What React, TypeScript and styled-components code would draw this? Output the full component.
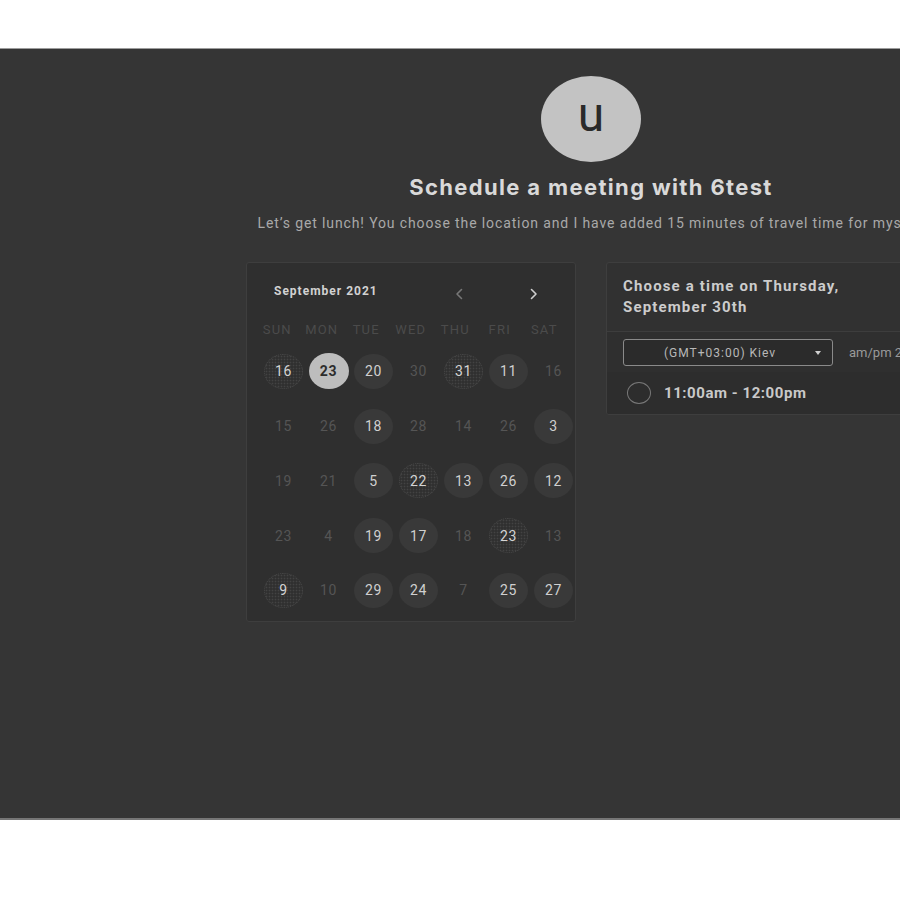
import React from "react";
import styled, { createGlobalStyle, css } from "styled-components";

const GlobalStyle = createGlobalStyle`
  html, body {
    margin: 0;
    padding: 0;
    background: #ffffff;
    overflow: hidden;
  }
  body {
    font-family: Roboto, "Liberation Sans", Arial, sans-serif;
  }
  * { box-sizing: border-box; }
`;

const Section = styled.section`
  margin-top: 48px;
  height: 772px;
  background: #353535;
  border-top: 1px solid #9c9c9c;
  border-bottom: 2px solid #767676;
  overflow: hidden;
  display: flex;
  padding-top: 27px;
`;

const Column = styled.div`
  width: 690px;
  flex-shrink: 0;
  margin-left: 246px;
  display: flex;
  flex-direction: column;
  align-items: center;
`;

const Avatar = styled.div`
  width: 100px;
  height: 86px;
  border-radius: 50%;
  background: #c3c3c3;
  color: #2a2a2a;
  display: flex;
  align-items: center;
  justify-content: center;
  font-family: Roboto, "Liberation Sans", sans-serif;
  font-size: 48px;
  line-height: 1;
  padding-bottom: 8px;
`;

const Title = styled.h1`
  margin: 11px 0 0;
  font-family: Inter, Roboto, sans-serif;
  font-weight: 700;
  font-size: 22px;
  line-height: 28px;
  letter-spacing: 1.35px;
  color: #d9d9d9;
  white-space: nowrap;
`;

const Subtitle = styled.p`
  margin: 12px 0 0;
  font-size: 14px;
  line-height: 20px;
  letter-spacing: 0.88px;
  color: #a9a9a9;
  white-space: nowrap;
`;

const Cards = styled.div`
  margin-top: 29px;
  width: 100%;
  display: flex;
  gap: 30px;
  align-items: flex-start;
`;

const CalendarCard = styled.div`
  width: 330px;
  flex-shrink: 0;
  background: #2f2f2f;
  border: 1px solid #3e3e3e;
  border-radius: 3px;
  padding: 20px 0 3px;
`;

const CalHeader = styled.div`
  display: flex;
  align-items: center;
  height: 16px;
  padding-left: 27px;
`;

const MonthLabel = styled.span`
  font-size: 12px;
  font-weight: 700;
  letter-spacing: 1px;
  color: #d2d2d2;
  width: 180px;
`;

const NavButton = styled.span<{ $bright?: boolean }>`
  display: inline-flex;
  align-items: center;
  justify-content: center;
  width: 10px;
  height: 16px;
  margin-top: 6px;
  color: ${(p) => (p.$bright ? "#cfcfcf" : "#777777")};
`;

const NavGap = styled.span`
  width: 65px;
`;

const Weekdays = styled.div`
  margin: 18px 0 0 8px;
  display: grid;
  grid-template-columns: repeat(7, 44.5px);
  height: 24px;
  align-items: center;
`;

const Weekday = styled.span`
  text-align: center;
  font-size: 13px;
  color: #4b4b4b;
  letter-spacing: 1.2px;
`;

const DayGrid = styled.div`
  margin: 3px 0 0 14px;
  display: grid;
  grid-template-columns: repeat(7, 45px);
  grid-auto-rows: 54.75px;
`;

const DayCell = styled.div`
  display: flex;
  align-items: center;
  justify-content: center;
`;

type DayState = "a" | "d" | "t" | "s";

const Day = styled.span<{ $state: DayState }>`
  width: 39px;
  height: 35px;
  border-radius: 50%;
  display: flex;
  align-items: center;
  justify-content: center;
  font-size: 14px;
  font-weight: 400;
  letter-spacing: 0.6px;
  color: #d0d0d0;
  ${(p) =>
    p.$state === "a" &&
    css`
      background: #393939;
    `}
  ${(p) =>
    p.$state === "d" &&
    css`
      color: #555555;
    `}
  ${(p) =>
    p.$state === "t" &&
    css`
      background-color: #303030;
      background-image: radial-gradient(circle, rgba(255, 255, 255, 0.09) 0.7px, transparent 1.1px);
      background-size: 3px 3px;
      border: 1px dotted #484848;
      color: #d4d4d4;
    `}
  ${(p) =>
    p.$state === "s" &&
    css`
      background: #bdbdbd;
      color: #2c2c2c;
      font-weight: 700;
      width: 40px;
      height: 36px;
    `}
`;

const TimePanel = styled.div`
  width: 330px;
  flex-shrink: 0;
  background: #313131;
  border: 1px solid #3e3e3e;
  border-radius: 3px;
  overflow: hidden;
`;

const PanelHeader = styled.div`
  padding: 13px 16px 13px;
  font-size: 15px;
  font-weight: 700;
  line-height: 21px;
  letter-spacing: 1.15px;
  color: #cccccc;
  border-bottom: 1px solid #3d3d3d;
`;

const ControlsRow = styled.div`
  display: flex;
  align-items: center;
  gap: 16px;
  padding: 7px 16px 6px;
  background: #2f2f2f;
  white-space: nowrap;
`;

const Select = styled.div`
  width: 210px;
  flex-shrink: 0;
  height: 27px;
  border: 1px solid #8a8a8a;
  border-radius: 3px;
  background: #2b2b2b;
  display: flex;
  align-items: center;
  padding: 0 10px 0 40px;
  font-size: 12px;
  letter-spacing: 1px;
  color: #b8b8b8;
`;

const SelectText = styled.span`
  flex: 1;
`;

const Caret = styled.span`
  width: 0;
  height: 0;
  border-left: 3.5px solid transparent;
  border-right: 3.5px solid transparent;
  border-top: 4px solid #d0d0d0;
  margin-right: 1px;
`;

const FormatLabel = styled.span`
  flex-shrink: 0;
  font-size: 13px;
  letter-spacing: 0;
  color: #9a9a9a;
`;

const TimeRow = styled.div`
  display: flex;
  align-items: center;
  gap: 13px;
  height: 42px;
  padding-left: 20px;
  background: #2d2d2d;
`;

const Radio = styled.span`
  width: 24px;
  height: 22px;
  border-radius: 50%;
  border: 1.5px solid #787878;
`;

const TimeText = styled.span`
  font-size: 15px;
  font-weight: 700;
  letter-spacing: 0.55px;
  color: #c9c9c9;
`;

const weekdays = ["SUN", "MON", "TUE", "WED", "THU", "FRI", "SAT"];

const rows: [string, DayState][][] = [
  [["16", "t"], ["23", "s"], ["20", "a"], ["30", "d"], ["31", "t"], ["11", "a"], ["16", "d"]],
  [["15", "d"], ["26", "d"], ["18", "a"], ["28", "d"], ["14", "d"], ["26", "d"], ["3", "a"]],
  [["19", "d"], ["21", "d"], ["5", "a"], ["22", "t"], ["13", "a"], ["26", "a"], ["12", "a"]],
  [["23", "d"], ["4", "d"], ["19", "a"], ["17", "a"], ["18", "d"], ["23", "t"], ["13", "d"]],
  [["9", "t"], ["10", "d"], ["29", "a"], ["24", "a"], ["7", "d"], ["25", "a"], ["27", "a"]],
];

const Chevron = ({ dir }: { dir: "left" | "right" }) => (
  <svg width="8" height="12" viewBox="0 0 8 12" fill="none">
    <path
      d={dir === "left" ? "M6.5 1.5 L2 6 L6.5 10.5" : "M1.5 1.5 L6 6 L1.5 10.5"}
      stroke="currentColor"
      strokeWidth="1.6"
      strokeLinecap="round"
      strokeLinejoin="round"
    />
  </svg>
);

export default function App() {
  return (
    <>
      <GlobalStyle />
      <Section>
        <Column>
          <Avatar>u</Avatar>
          <Title>Schedule a meeting with 6test</Title>
          <Subtitle>
            Let’s get lunch! You choose the location and I have added 15 minutes of travel time for myself.
          </Subtitle>
          <Cards>
            <CalendarCard>
              <CalHeader>
                <MonthLabel>September 2021</MonthLabel>
                <NavButton>
                  <Chevron dir="left" />
                </NavButton>
                <NavGap />
                <NavButton $bright>
                  <Chevron dir="right" />
                </NavButton>
              </CalHeader>
              <Weekdays>
                {weekdays.map((w) => (
                  <Weekday key={w}>{w}</Weekday>
                ))}
              </Weekdays>
              <DayGrid>
                {rows.flat().map(([label, state], i) => (
                  <DayCell key={i}>
                    <Day $state={state}>{label}</Day>
                  </DayCell>
                ))}
              </DayGrid>
            </CalendarCard>
            <TimePanel>
              <PanelHeader>
                Choose a time on Thursday,
                <br />
                September 30th
              </PanelHeader>
              <ControlsRow>
                <Select>
                  <SelectText>(GMT+03:00) Kiev</SelectText>
                  <Caret />
                </Select>
                <FormatLabel>am/pm 24h</FormatLabel>
              </ControlsRow>
              <TimeRow>
                <Radio />
                <TimeText>11:00am - 12:00pm</TimeText>
              </TimeRow>
            </TimePanel>
          </Cards>
        </Column>
      </Section>
    </>
  );
}
